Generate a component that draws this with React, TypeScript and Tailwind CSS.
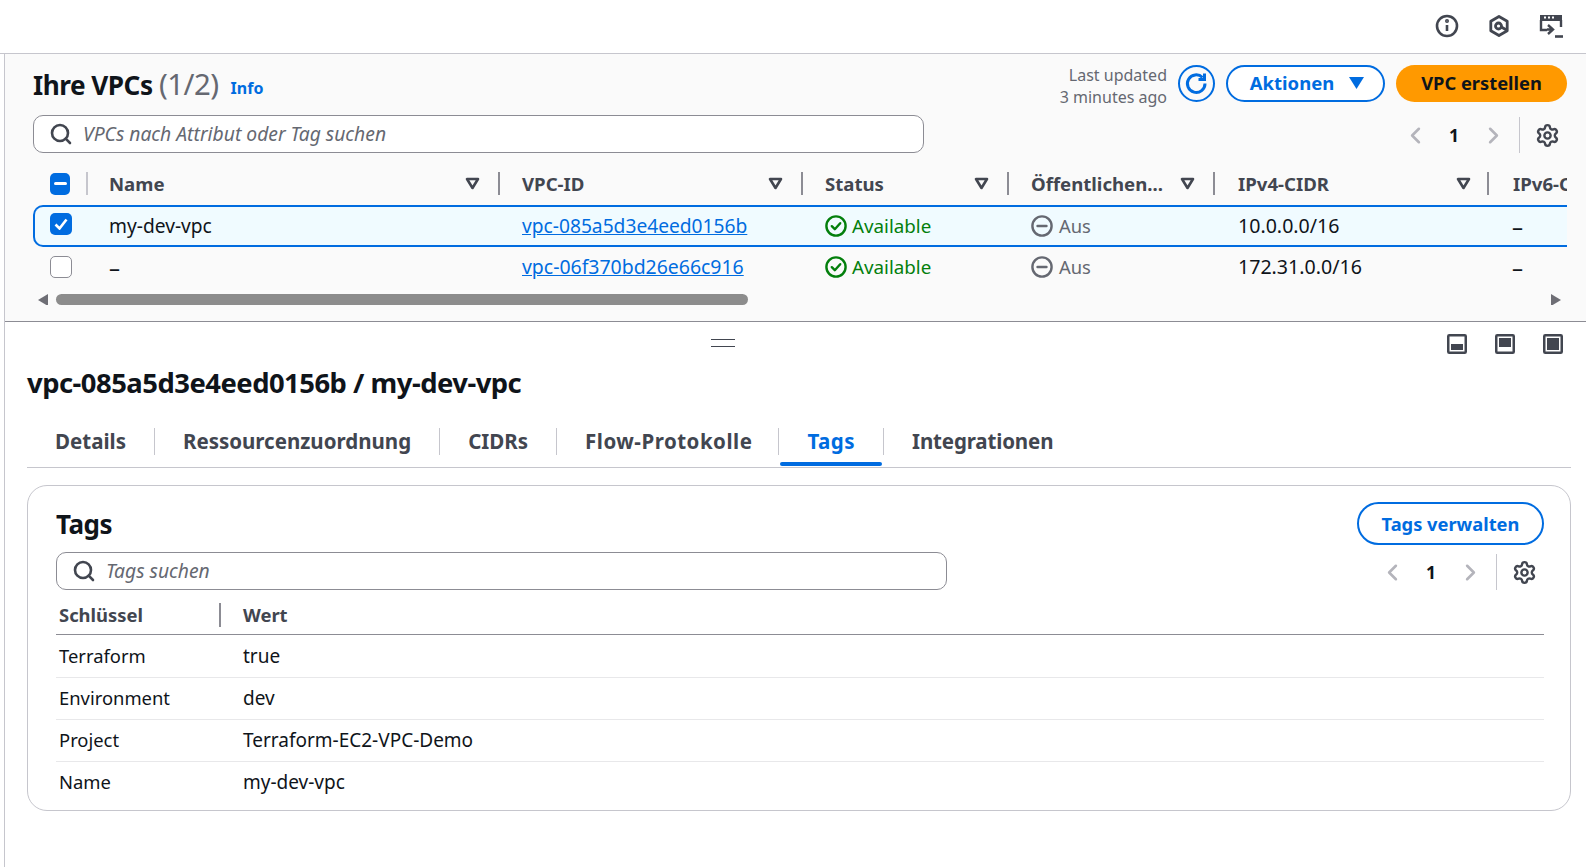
import { ChevronLeft, ChevronRight, Search, Settings } from 'lucide-react';

const font = "font-['Noto_Sans',sans-serif]";

const FilterArrow = () => (
  <svg width="15" height="13" viewBox="0 0 15 13" className="shrink-0">
    <path d="M2 2h11L7.5 11z" fill="none" stroke="#424650" strokeWidth="2.6" strokeLinejoin="round" />
  </svg>
);

const HeaderCell = ({ label, pl, pr = 'pr-[18px]' }: { label: string; pl: string; pr?: string }) => (
  <div className={`flex items-center justify-between h-[23px] border-r-2 border-[#8c8c94] ${pr} ${pl}`}>
    <span className="font-bold text-[#424650] text-[18.6px] whitespace-nowrap">{label}</span>
    <FilterArrow />
  </div>
);

const StatusOk = () => (
  <span className="flex items-center gap-[5px] text-[#037f0c] text-[18.8px]">
    <svg width="22" height="22" viewBox="0 0 22 22" fill="none" stroke="#037f0c" strokeWidth="2.4">
      <circle cx="11" cy="11" r="9.6" />
      <path d="M6.8 11.2l3 3 5.4-6" strokeLinecap="round" strokeLinejoin="round" />
    </svg>
    Available
  </span>
);

const StatusOff = () => (
  <span className="flex items-center gap-[6px] text-[#656871] text-[18.4px]">
    <svg width="22" height="22" viewBox="0 0 22 22" fill="none" stroke="#656871" strokeWidth="2.4">
      <circle cx="11" cy="11" r="9.6" />
      <path d="M6.5 11h9" strokeLinecap="round" />
    </svg>
    Aus
  </span>
);

const Pager = () => (
  <div className="flex items-center">
    <ChevronLeft size={27} strokeWidth={2.3} className="text-[#b4b4bb]" />
    <span className="font-bold text-[17.5px] text-[#0f141a] w-[51px] pr-[1px] text-center">1</span>
    <ChevronRight size={27} strokeWidth={2.3} className="text-[#b4b4bb]" />
    <div className="w-px h-[36px] bg-[#c6c6cd] ml-[12px] mr-[15px]" />
    <Settings size={25} strokeWidth={2.3} className="text-[#424650]" />
  </div>
);

const SearchBox = ({ placeholder }: { placeholder: string }) => (
  <div className="flex items-center h-[38px] w-[891px] rounded-[10px] border border-[#8c8c94] bg-white pl-[15px] gap-[10px]">
    <Search size={24} strokeWidth={2.6} className="text-[#424650]" />
    <span className="italic text-[#656871] text-[19.3px]">{placeholder}</span>
  </div>
);

const WindowIcon = ({ y, h }: { y: number; h: number }) => (
  <svg width="20" height="20" viewBox="0 0 20 20">
    <rect x="1.25" y="1.25" width="17.5" height="17.5" rx="1" fill="none" stroke="#424650" strokeWidth="2.5" />
    <rect x="4" y={y} width="12" height={h} fill="#424650" />
  </svg>
);

const tagRows = [
  ['Terraform', 'true'],
  ['Environment', 'dev'],
  ['Project', 'Terraform-EC2-VPC-Demo'],
  ['Name', 'my-dev-vpc'],
];

const tabs = [
  { label: 'Details', cls: 'px-[28px]' },
  { label: 'Ressourcenzuordnung', cls: 'px-[28px]' },
  { label: 'CIDRs', cls: 'px-[28px]' },
  { label: 'Flow-Protokolle', cls: 'pl-[28px] pr-[26px] tracking-[0.5px]' },
  { label: 'Tags', cls: 'px-[28px] tracking-[0.5px] text-[#006ce0]' },
  { label: 'Integrationen', cls: 'px-[28px] tracking-[-0.15px]' },
];

const colGrid = 'grid grid-cols-[55px_412px_303px_206px_206px_274px_78px]';

export default function App() {
  return (
    <div className={`${font} w-[1586px] h-[867px] overflow-hidden bg-white text-[#0f141a] text-[19.2px]`}>
      <div className="h-[54px] border-b border-[#c6c6cd] flex items-center justify-end gap-[28px] pr-[23px] pb-[2px]">
        <svg width="24" height="24" viewBox="0 0 24 24" fill="none" stroke="#424650" strokeWidth="2.6">
          <circle cx="12" cy="12" r="10" />
          <path d="M12 11v6" />
          <circle cx="12" cy="7" r="0.7" fill="#424650" />
        </svg>
        <svg width="24" height="24" viewBox="0 0 24 24" fill="none" stroke="#424650" strokeWidth="2.8">
          <path d="M12 2.5l8.2 4.8v9.4L12 21.5l-8.2-4.8V7.3z" strokeLinejoin="round" />
          <circle cx="11.5" cy="12" r="3" />
          <path d="M13.5 12.5l6 3.5" />
        </svg>
        <svg width="24" height="24" viewBox="0 0 24 24" fill="none">
          <path d="M1 1h22v6H1z" fill="#424650" />
          <path d="M2 6v10h6M22 6v7" stroke="#424650" strokeWidth="2.4" />
          <path d="M5 3.4h2M9 3.4h2M13 3.4h2" stroke="white" strokeWidth="2" />
          <path d="M9 11l5 4.5-5 4.5M8 15.5h5" stroke="#424650" strokeWidth="2.4" />
          <path d="M16 22.5h8" stroke="#424650" strokeWidth="2.6" />
        </svg>
      </div>

      <div className="ml-[4px] border-l border-[#c6c6cd] h-[813px]">
        <div className="h-[268px] bg-[#fafafa] border-b border-[#8c8c94] pl-[28px] pr-[19px] pt-[10px]">
          <div className="flex items-center justify-between h-[40px]">
            <div className="flex items-baseline gap-[12px]">
              <h1 className="text-[26.2px] font-bold tracking-[-0.5px]">
                Ihre VPCs <span className="font-normal text-[29.4px] text-[#656871]">(1/2)</span>
              </h1>
              <span className="text-[#006ce0] font-bold text-[16px] relative -top-px">Info</span>
            </div>
            <div className="flex items-center -mt-[2px]">
              <div className="text-right text-[16px] leading-[22px] text-[#656871] mr-[11px] pt-[6px]">
                <div>Last updated</div>
                <div>3 minutes ago</div>
              </div>
              <div className="w-[37px] h-[37px] rounded-full border-2 border-[#006ce0] flex items-center justify-center mr-[11px]">
                <svg width="25" height="25" viewBox="0 0 25 25" fill="none" stroke="#006ce0" strokeWidth="3">
                  <path d="M18.5 6.5A8.8 8.8 0 1 0 21 12.5" />
                  <path d="M20.5 2.5v6h-6" />
                </svg>
              </div>
              <div className="w-[159px] h-[37px] rounded-full border-2 border-[#006ce0] bg-white flex items-center justify-center gap-[15px] pl-[3px] text-[#006ce0] font-bold text-[18.5px] mr-[11px]">
                Aktionen
                <svg width="15" height="12" viewBox="0 0 15 12"><path d="M0 0h15L7.5 12z" fill="#006ce0" /></svg>
              </div>
              <div className="w-[171px] h-[37px] rounded-full bg-[#ff9900] flex items-center justify-center font-bold text-[18.3px]">
                VPC erstellen
              </div>
            </div>
          </div>

          <div className="flex items-center justify-between mt-[11px]">
            <SearchBox placeholder="VPCs nach Attribut oder Tag suchen" />
            <div className="pr-[7px] pt-[2px]"><Pager /></div>
          </div>

          <div className="mt-[19px] overflow-hidden">
            <div className={`${colGrid} h-[33px] items-start`}>
              <div className="flex items-center justify-between h-[23px] border-r-2 border-[#c6c6cd] pl-[17px] pr-[16px]">
                <div className="w-[22px] h-[22px] rounded-[5px] bg-[#006ce0] flex items-center justify-center">
                  <div className="w-[13px] h-[3px] bg-white rounded-sm" />
                </div>
              </div>
              <HeaderCell label="Name" pl="pl-[21px]" />
              <HeaderCell label="VPC-ID" pl="pl-[22px]" />
              <HeaderCell label="Status" pl="pl-[22px]" />
              <HeaderCell label="Öffentlichen..." pl="pl-[22px]" />
              <HeaderCell label="IPv4-CIDR" pl="pl-[23px]" pr="pr-[16px]" />
              <div className="pl-[24px] h-[23px] overflow-hidden font-bold text-[#424650] text-[18.6px] whitespace-nowrap leading-[23px]">IPv6-CIDR</div>
            </div>
            <div className={`${colGrid} items-center h-[42px] bg-[#f0fbff] border-y-2 border-l-2 border-[#006ce0] rounded-l-[10px]`}>
              <div className="pl-[15px] pb-[4px]">
                <div className="w-[22px] h-[22px] rounded-[5px] bg-[#006ce0] flex items-center justify-center">
                  <svg width="14" height="12" viewBox="0 0 14 12" fill="none" stroke="white" strokeWidth="2.6">
                    <path d="M1.5 6.5L5.5 10.5 12.5 1.5" />
                  </svg>
                </div>
              </div>
              <div className="pl-[19px]">my-dev-vpc</div>
              <div className="pl-[20px]"><a className="text-[#006ce0] underline">vpc-085a5d3e4eed0156b</a></div>
              <div className="pl-[20px]"><StatusOk /></div>
              <div className="pl-[20px]"><StatusOff /></div>
              <div className="pl-[21px] text-[19.6px]">10.0.0.0/16</div>
              <div className="pl-[21px] text-[22px]">–</div>
            </div>
            <div className={`${colGrid} items-center h-[42px] pb-[2px]`}>
              <div className="pl-[17px]">
                <div className="w-[22px] h-[22px] rounded-[5px] border border-[#8c8c94] bg-white" />
              </div>
              <div className="pl-[21px] text-[22px]">–</div>
              <div className="pl-[22px]"><a className="text-[#006ce0] underline text-[19.45px]">vpc-06f370bd26e66c916</a></div>
              <div className="pl-[22px]"><StatusOk /></div>
              <div className="pl-[22px]"><StatusOff /></div>
              <div className="pl-[23px] text-[19.6px]">172.31.0.0/16</div>
              <div className="pl-[23px] text-[22px]">–</div>
            </div>
            <div className="flex items-center mt-[5px] h-[11px] pl-[5px] pr-[6px]">
              <svg width="10" height="12" viewBox="0 0 10 12"><path d="M10 0v12L0 6z" fill="#6e6e75" /></svg>
              <div className="w-[692px] h-[11px] rounded-full bg-[#8c8c8c] ml-[8px]" />
              <div className="flex-1" />
              <svg width="10" height="12" viewBox="0 0 10 12"><path d="M0 0v12L10 6z" fill="#6e6e75" /></svg>
            </div>
          </div>
        </div>

        <div className="relative pl-[22px] pr-[15px]">
          <div className="absolute left-[706px] top-[17px] w-[24px] h-[8px] border-y border-[#424650]" />
          <div className="flex justify-end gap-[28px] pt-[12px] pr-[8px] h-[43px]">
            <WindowIcon y={10} h={6} />
            <WindowIcon y={4} h={9} />
            <WindowIcon y={4} h={12} />
          </div>
          <h2 className="text-[27.4px] font-bold leading-[36px] tracking-[-0.5px]">vpc-085a5d3e4eed0156b / my-dev-vpc</h2>

          <div className="flex items-center h-[64px] pt-[11px] border-b border-[#c6c6cd] mt-[3px] text-[20.5px] font-bold text-[#424650]">
            {tabs.map((tab, i) => (
              <div
                key={tab.label}
                className={`relative h-[27px] leading-[27px] whitespace-nowrap ${tab.cls} ${i < tabs.length - 1 ? 'border-r border-[#c6c6cd]' : ''}`}
              >
                {tab.label}
                {tab.label === 'Tags' && <div className="absolute left-[1px] right-[1px] top-[34px] h-[4px] rounded-full bg-[#006ce0]" />}
              </div>
            ))}
          </div>

          <div className="mt-[17px] h-[326px] rounded-[20px] border border-[#c6c6cd] pl-[28px] pr-[26px] pt-[17px]">
            <div className="flex items-center justify-between h-[43px]">
              <h3 className="text-[26px] font-bold tracking-[-0.5px]">Tags</h3>
              <div className="w-[187px] h-[43px] -mt-[2px] rounded-full border-2 border-[#006ce0] flex items-center justify-center text-[#006ce0] font-bold text-[18.3px]">
                Tags verwalten
              </div>
            </div>
            <div className="flex items-center justify-between mt-[6px]">
              <SearchBox placeholder="Tags suchen" />
              <div className="pr-[7px] pt-[2px]"><Pager /></div>
            </div>
            <div className="grid grid-cols-[187px_1fr] h-[45px] items-end pb-[7px] border-b border-[#8c8c94] font-bold text-[#424650] text-[18.4px]">
              <div className="pl-[3px] h-[24px] leading-[24px] border-r-2 border-[#8c8c94] mr-[22px]">Schlüssel</div>
              <div className="h-[24px] leading-[24px]">Wert</div>
            </div>
            {tagRows.map(([key, value], i) => (
              <div key={key} className={`grid grid-cols-[187px_1fr] items-center ${i === 0 ? 'h-[43px]' : 'h-[42px]'} ${i < 3 ? 'border-b border-[#e8e8ea]' : ''}`}>
                <div className={`pl-[3px] text-[18.4px] ${i > 0 ? 'pb-[2px]' : ''}`}>{key}</div>
                <div className={`text-[19px] ${i === 3 ? 'pb-[2px]' : ''}`}>{value}</div>
              </div>
            ))}
          </div>
        </div>
      </div>
    </div>
  );
}
